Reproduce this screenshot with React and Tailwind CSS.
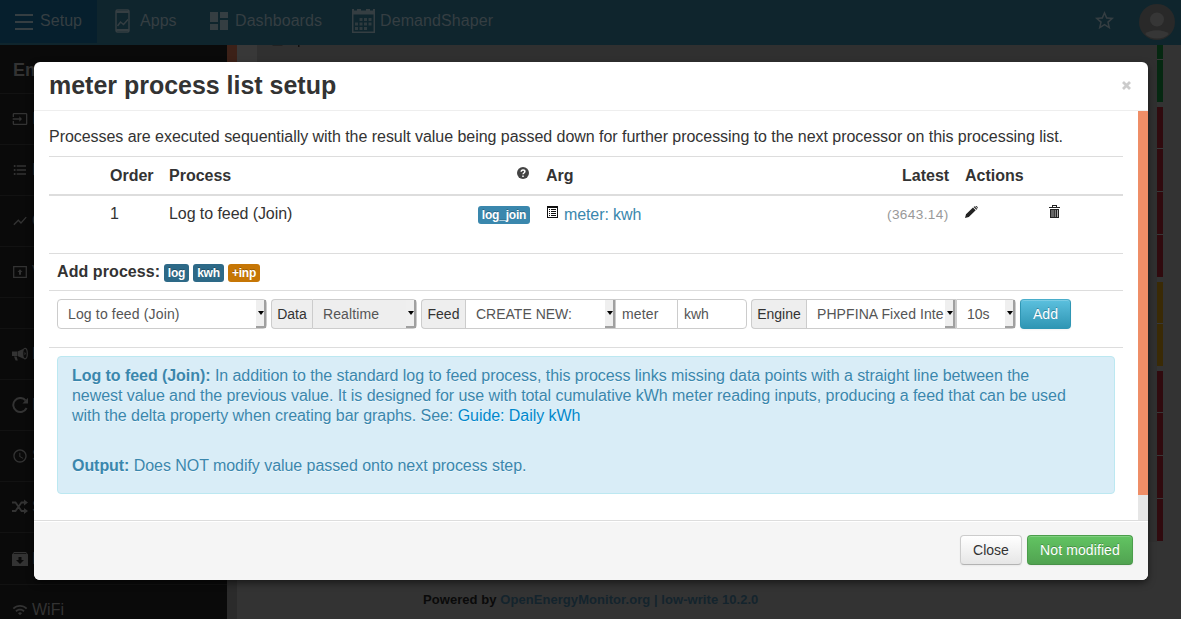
import React from "react";
import {
  MdOutlineInput, MdFormatListBulleted, MdShowChart, MdAccessTime,
  MdShuffle, MdWifi, MdDashboard, MdStarBorder,
} from "react-icons/md";

const Svg = ({ children, className, box = "0 0 16 16" }) => (
  <svg viewBox={box} className={className} fill="currentColor">{children}</svg>
);

const Megaphone = () => (
  <Svg className="h-4 w-4 shrink-0">
    <path d="M0 5.500h5v4.500H0zM5.500 5.500 11 3v9.500L5.500 10zM2 10.500h2.600l1.200 4H3.600z" />
    <ellipse cx="13" cy="7.600" rx="2.300" ry="5.200" fill="none" stroke="currentColor" strokeWidth="1.200" />
    <path d="M12.500 5.900a1.800 1.800 0 0 1 0 3.400z" />
  </Svg>
);
const Refresh = () => (
  <Svg className="h-4 w-4 shrink-0">
    <path d="M13.600 3.400A7 7 0 1 0 14.600 11" fill="none" stroke="currentColor" strokeWidth="2" />
    <path d="M16 .8v5.600h-5.600z" />
  </Svg>
);
const ScreenUp = () => (
  <Svg className="h-4 w-4 shrink-0">
    <path d="M1.700 2.700h12.600v10.600H1.700z" fill="none" stroke="currentColor" strokeWidth="1.300" />
    <path d="M8 5.200 10.500 8H9v2.800H7V8H5.500z" />
  </Svg>
);
const Archive = () => (
  <Svg className="h-4 w-4 shrink-0">
    <path fillRule="evenodd" d="M2 1h12l2 2.500V15H0V3.500zM2 2.200 1.500 3h13L14 2.200zM6.500 6v3H4l4 4 4-4H9.500V6z" />
  </Svg>
);
const Shuffle = () => (
  <Svg className="h-4 w-4 shrink-0">
    <path d="M0 3.500h3.500l6 8.500H13M0 12h3.500l6-8.500H13" fill="none" stroke="currentColor" strokeWidth="1.800" />
    <path d="M12 .5 16 3.500l-4 3zM12 9l4 3-4 3z" />
  </Svg>
);

const sidebar = [
  { icon: <MdOutlineInput className="h-4 w-4 shrink-0" />, label: "Inputs", h: "h-[51px]" },
  { icon: <MdFormatListBulleted className="h-4 w-4 shrink-0" />, label: "Feeds", h: "h-[51px]" },
  { icon: <MdShowChart className="h-4 w-4 shrink-0" />, label: "Graphs", h: "h-[51px]" },
  { icon: <ScreenUp />, label: "Visualization", h: "h-[51px]" },
  { icon: null, label: "", h: "h-[31px]" },
  { icon: <Megaphone />, label: "Logger", h: "h-[51px]" },
  { icon: <Refresh />, label: "Reset", h: "h-[51px]" },
  { icon: <MdAccessTime className="h-4 w-4 shrink-0" />, label: "Schedule", h: "h-[51px]" },
  { icon: <Shuffle />, label: "Sync", h: "h-[51px]" },
  { icon: <Archive />, label: "Backup", h: "h-[52px]" },
  { icon: <MdWifi className="h-4 w-4 shrink-0" />, label: "WiFi", h: "h-[51px]" },
];

const statusGroups = [
  { color: "bg-[#052811]", rows: ["h-[14px]", "h-[42px]"] },
  { color: "bg-[#300a0e]", rows: ["h-[41px]", "h-[42px]", "h-[42px]", "h-[42px]"] },
  { color: "bg-[#3a2a05]", rows: ["h-[41px]", "h-[42px]"] },
  { color: "bg-[#300a0e]", rows: ["h-[41px]", "h-[42px]", "h-[42px]", "h-[42px]"] },
];

function TopBar() {
  return (
    <nav className="flex h-[45px] shrink-0 items-center bg-[#0f252d] text-[16px] text-[#353e42]">
      <div className="flex h-[43px] w-[97px] items-center self-start bg-[#061f2d] pl-[15px]">
        <svg className="-mt-[2px] h-[18px] w-[18px]" viewBox="0 0 18 18" fill="none" stroke="currentColor" strokeWidth="2">
          <path d="M0 3h18M0 10h18M0 17h18" />
        </svg>
        <span className="-mt-[2px] ml-[7px] tracking-[0.050px]">Setup</span>
      </div>
      <div className="flex w-[112px] items-center pl-[17px]">
        <svg className="-mt-[3px] h-6 w-[17px]" viewBox="0 0 17 24" fill="none" stroke="currentColor" strokeWidth="1.500">
          <rect x="2" y="1" width="13" height="22" rx="1.500" />
          <path d="M2 3h13M2 21h13" strokeWidth="2" />
          <path d="m3.500 17 3-4 3 2.500L14 10.500" />
        </svg>
        <span className="-mt-[4px] ml-[9px] tracking-[0.050px]">Apps</span>
      </div>
      <div className="flex w-[143px] items-center">
        <MdDashboard className="-ml-[2px] -mt-[3px] h-6 w-6" />
        <span className="-mt-[4px] ml-[4px] tracking-[0.080px]">Dashboards</span>
      </div>
      <div className="flex flex-1 items-center">
        <svg className="-mt-[3px] h-6 w-[23px]" viewBox="0 0 23 24" fill="currentColor">
          <path fillRule="evenodd" d="M0 0h2v1.500h3V0h4v1.500h5V0h4v1.500h3V0h2v24H0zM1.500 5.500v17h20v-17z" />
          <path d="M7.500 9h3v3h-3zM12 9h3v3h-3zM16.500 9h3v3h-3zM3 13.500h3v3H3zM7.500 13.500h3v3h-3zM12 13.500h3v3h-3zM16.500 13.500h3v3h-3zM3 18h3v3H3zM7.500 18h3v3h-3zM12 18h3v3h-3z" opacity=".85" />
        </svg>
        <span className="-mt-[4px] ml-[5px] tracking-[0.100px]">DemandShaper</span>
      </div>
      <MdStarBorder className="-mt-[4px] mr-[23px] h-[23px] w-[23px]" />
      <svg className="-mt-px mr-[6px] h-9 w-9" viewBox="0 0 36 36">
        <circle cx="18" cy="18" r="18" fill="#292929" />
        <circle cx="18" cy="15.500" r="7" fill="#363636" />
        <path d="M6 30c5-5 19-5 24 0-6 6-18 6-24 0z" fill="#363636" />
      </svg>
    </nav>
  );
}

const Badge = ({ children, className }) => (
  <span className={`inline-flex h-[18px] items-center justify-center rounded-[3px] text-[12px] font-bold leading-[14px] tracking-[-0.200px] text-white [text-shadow:0_-1px_0_rgba(0,0,0,0.25)] ${className}`}>
    {children}
  </span>
);

const Select = ({ children, className = "", disabled }) => (
  <div className={`flex h-[30px] items-stretch border border-[#ccc] ${disabled ? "bg-[#eee]" : "bg-white"} ${className}`}>
    <span className="min-w-0 flex-1 overflow-hidden whitespace-nowrap pl-[10px] leading-7">{children}</span>
    <span className="flex w-[10px] items-center justify-center border-b-2 border-r-2 border-[#a0a0a0] bg-[#efefef]">
      <svg className="-mr-[2px] h-[4px] w-[6px] shrink-0" viewBox="0 0 6 4"><path d="M0 0h6L3 4z" /></svg>
    </span>
  </div>
);
const Addon = ({ children, className }) => (
  <span className={`h-[30px] rounded-l border border-r-0 border-[#ccc] bg-[#eee] text-center leading-7 text-[#333] ${className}`}>{children}</span>
);
const TextBox = ({ children, className }) => (
  <span className={`h-[30px] border border-[#ccc] bg-white pl-[6px] leading-7 ${className}`}>{children}</span>
);

function ProcessModal() {
  return (
    <section className="absolute left-[34px] top-[62px] flex h-[518px] w-[1114px] flex-col overflow-hidden rounded-[6px] bg-white text-[16px] leading-5 text-[#333] shadow-[0_3px_7px_rgba(0,0,0,0.5)]">
      <header className="flex h-[49px] shrink-0 items-center justify-between border-b border-[#eee] px-[15px]">
        <h3 className="-mt-[2px] text-[25px] font-bold leading-[30px] tracking-[-0.020px]">meter process list setup</h3>
        <svg className="mr-[2px] -mt-px h-[9px] w-[9px]" viewBox="0 0 9 9" stroke="#ccc" strokeWidth="2.800">
          <path d="m1 1 7 7M8 1 1 8" />
        </svg>
      </header>
      <div className="flex h-[409px] shrink-0">
        <div className="flex-1 pl-[15px] pr-[15px] pt-4">
          <p className="h-[29px] whitespace-nowrap tracking-[-0.042px]">Processes are executed sequentially with the result value being passed down for further processing to the next processor on this processing list.</p>
          <div className="grid h-[38px] grid-cols-[61px_59px_369px_352px_64px_169px] border-t border-[#ddd] pt-[9px] font-bold">
            <span /><span>Order</span><span>Process</span>
            <span className="flex">
              <svg className="-ml-[21px] mr-[16px] mt-px h-3 w-3" viewBox="0 0 12 12">
                <circle cx="6" cy="6" r="6" fill="#444" />
                <path d="M4.200 4.700c0-2.400 3.700-2.300 3.700-.1C7.900 6 6 6 6 7.300M6 8.400v1.500" fill="none" stroke="#fff" strokeWidth="1.500" />
              </svg>
              <span className="ml-[1px]">Arg</span>
            </span>
            <span className="ml-3">Latest</span><span className="ml-[11px]">Actions</span>
          </div>
          <div className="grid h-[59px] grid-cols-[61px_59px_309px_69px_340px_78px_84px_20px] border-t-2 border-[#ddd] pt-[8px]">
            <span /><span>1</span><span className="tracking-[-0.070px]">Log to feed (Join)</span>
            <span><Badge className="mt-[2px] w-[52px] bg-[#3a87ad]">log_join</Badge></span>
            <span className="flex text-[#3a87ad]">
              <svg className="mt-[2px] h-3 w-[11px]" viewBox="0 0 11 12" shapeRendering="crispEdges" fill="#111">
                <path fillRule="evenodd" d="M0 0h11v12H0zM1 2v9h9V2z" />
                <path d="M2 3h1v1H2zM4 3h5v1H4zM2 5h1v1H2zM4 5h5v1H4zM2 7h1v1H2zM4 7h5v1H4zM2 9h1v1H2zM4 9h5v1H4z" />
              </svg>
              <span className="ml-[6px] mt-px tracking-[-0.100px]">meter: kwh</span>
            </span>
            <span className="mt-px whitespace-nowrap text-[13.600px] tracking-[0.380px] text-[#999]">(3643.14)</span>
            <svg className="mt-[2px] h-3 w-[13px]" viewBox="0 0 13 12" fill="#222">
              <path d="m0 12 1-3.800L8 1.500l2.700 2.700-6.900 6.700zM8.600 1 9.500.2 12.300 3l-.9.800zM10.200 0c1.200-.6 3.200 1.400 2.500 2.600z" />
            </svg>
            <svg className="mt-px h-[13px] w-[11px]" viewBox="0 0 11 13" fill="#222">
              <path fillRule="evenodd" d="M3 2V0h5v2h3v1H0V2zM4 1v1h3V1zM1 4h9v9H1z" />
              <path d="M2.500 5h1v7h-1zM4.500 5h.7v7h-.7zM6.300 5h.7v7h-.7zM8 5h1v7H8z" fill="#aaa" />
            </svg>
          </div>
          <div className="flex h-[37px] gap-1 border-t border-[#ddd] pl-2 pt-[8px]">
            <b className="w-[103px] whitespace-nowrap tracking-[0.080px]">Add process:</b>
            <Badge className="mt-[2px] w-[25px] bg-[#2d6987]">log</Badge>
            <Badge className="mt-[2px] w-[31px] bg-[#2d6987]">kwh</Badge>
            <Badge className="mt-[2px] w-8 bg-[#c67605]">+inp</Badge>
          </div>
          <div className="flex h-[57px] border-t border-[#ddd] pl-2 pt-[8px] text-[14px] text-[#555]">
            <Select className="w-[210px] rounded tracking-[0.150px]">Log to feed (Join)</Select>
            <Addon className="ml-1 w-[41px]">Data</Addon>
            <Select disabled className="w-[105px] rounded-r tracking-[0.100px]">Realtime</Select>
            <Addon className="ml-1 w-[44px]">Feed</Addon>
            <Select className="w-[151px]">CREATE NEW:</Select>
            <TextBox className="w-[62px] border-l-0 tracking-[0.150px]">meter</TextBox>
            <TextBox className="-ml-px w-[70px] rounded-r">kwh</TextBox>
            <Addon className="ml-1 w-[55px]">Engine</Addon>
            <Select className="w-[150px] tracking-[0.080px]">PHPFINA Fixed Inte</Select>
            <Select className="w-[60px] rounded-r">10s</Select>
            <button className="ml-1 h-[30px] w-[51px] rounded border border-[#2f96b4] border-t-[#4aaecb] bg-linear-to-b from-[#5bc0de] to-[#2f96b4] text-white shadow-[inset_0_1px_0_rgba(255,255,255,0.2),0_1px_2px_rgba(0,0,0,0.05)] [text-shadow:0_-1px_0_rgba(0,0,0,0.25)]">Add</button>
          </div>
          <div className="border-t border-[#ddd] px-2 pt-[8px]">
            <div className="h-[138px] rounded border border-[#bce8f1] bg-[#d9edf7] pl-[14px] pt-[9px] tracking-[-0.055px] text-[#3a87ad] [text-shadow:0_1px_0_rgba(255,255,255,0.5)]">
              <p className="whitespace-nowrap">
                <b>Log to feed (Join):</b> In addition to the standard log to feed process, this process links missing data points with a straight line between the<br />
                newest value and the previous value. It is designed for use with total cumulative kWh meter reading inputs, producing a feed that can be used<br />
                with the delta property when creating bar graphs. See: <a className="text-[#0088cc]">Guide: Daily kWh</a>
              </p>
              <p className="mt-[30px]"><b>Output:</b> Does NOT modify value passed onto next process step.</p>
            </div>
          </div>
        </div>
        <div className="w-[10px] bg-[#e6e6e6]"><div className="h-[384px] bg-[#ef8e67]" /></div>
      </div>
      <footer className="flex flex-1 justify-end gap-[5px] border-t border-[#ddd] bg-[#f5f5f5] pr-[15px] pt-[14px] text-[14px] shadow-[inset_0_1px_0_#fff]">
        <button className="h-[30px] w-[62px] rounded border border-[#ccc] border-b-[#b3b3b3] bg-linear-to-b from-white to-[#e6e6e6] shadow-[inset_0_1px_0_rgba(255,255,255,0.2),0_1px_2px_rgba(0,0,0,0.05)]">Close</button>
        <button className="h-[30px] w-[106px] rounded border border-[#4b9e4b] border-b-[#387038]/60 bg-linear-to-b from-[#62c462] to-[#51a351] tracking-[0.100px] text-white shadow-[inset_0_1px_0_rgba(255,255,255,0.2),0_1px_2px_rgba(0,0,0,0.05)] [text-shadow:0_-1px_0_rgba(0,0,0,0.25)]">Not modified</button>
      </footer>
    </section>
  );
}

export default function App() {
  return (
    <div className="relative flex h-[619px] w-[1181px] flex-col overflow-hidden bg-[#333] [font-family:'Liberation_Sans',Arial,sans-serif]">
      <TopBar />
      <div className="flex min-h-0 flex-1">
        <aside className="flex w-[227px] flex-col bg-[#0a0a0a] text-[16px] text-[#333]">
          <div className="flex h-[49px] shrink-0 items-center border-b border-[#121212] pl-[13px] pt-[2px] text-[18px] font-bold">Emoncms</div>
          {sidebar.map((item, i) => (
            <div key={i} className={`flex shrink-0 items-center border-b border-[#121212] pl-3 ${item.h}`}>
              {item.icon}<span className="ml-1">{item.label}</span>
            </div>
          ))}
        </aside>
        <div className="flex w-[10px] flex-col bg-[#2b2b2b]"><div className="h-[450px] bg-[#3c2118]" /></div>
        <main className="flex flex-1 flex-col">
          <div className="flex h-[497px]">
            <div className="w-[20px] bg-[#383838]" />
            <div className="flex-1 bg-[#303030] pl-[15px]">
              <svg className="h-[2px] w-[30px]" viewBox="0 0 30 2">
                <path d="M0 0h11l-1 1H1z" fill="#222" />
                <path d="M26 0h1.500v2H26z" fill="#111" />
              </svg>
            </div>
            <div className="flex w-[24px] flex-col gap-[5px] bg-[#333]">
              {statusGroups.map((g, i) => (
                <div key={i} className="flex w-[6px] flex-col gap-px bg-[#383838]">
                  {g.rows.map((h, j) => <div key={j} className={`${h} ${g.color}`} />)}
                </div>
              ))}
            </div>
          </div>
          <p className="mt-[50px] pl-[186px] text-[13px] font-bold leading-[16px] tracking-[0.060px] text-[#0a0a0a]">
            Powered by <span className="text-[#14242d]">OpenEnergyMonitor.org | low-write 10.2.0</span>
          </p>
        </main>
      </div>
      <ProcessModal />
    </div>
  );
}
